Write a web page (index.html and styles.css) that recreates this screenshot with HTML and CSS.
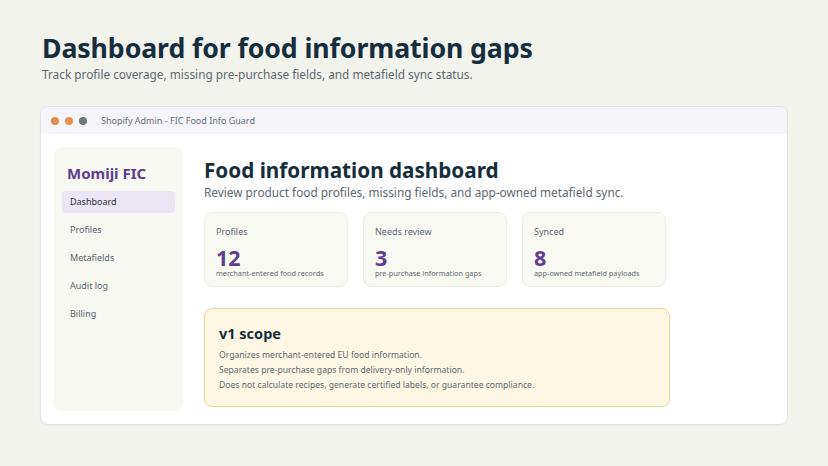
FILE: index.html
```html
<!DOCTYPE html>
<html>
<head>
<meta charset="utf-8">
<link rel="stylesheet" href="styles.css">
</head>
<body>
<header class="page-head">
  <h1 class="page-title">Dashboard for food information gaps</h1>
  <p class="page-sub">Track profile coverage, missing pre-purchase fields, and metafield sync status.</p>
</header>
<div class="window">
  <div class="titlebar">
    <span class="dot dot-a"></span>
    <span class="dot dot-b"></span>
    <span class="dot dot-c"></span>
    <span class="titlebar-text">Shopify Admin - FIC Food Info Guard</span>
  </div>
  <div class="window-body">
    <nav class="sidebar">
      <div class="brand">Momiji FIC</div>
      <ul class="nav">
        <li class="nav-item active">Dashboard</li>
        <li class="nav-item">Profiles</li>
        <li class="nav-item">Metafields</li>
        <li class="nav-item">Audit log</li>
        <li class="nav-item">Billing</li>
      </ul>
    </nav>
    <main class="main">
      <h2 class="main-title">Food information dashboard</h2>
      <p class="main-sub">Review product food profiles, missing fields, and app-owned metafield sync.</p>
      <div class="cards">
        <div class="card">
          <div class="card-label">Profiles</div>
          <div class="card-num">12</div>
          <div class="card-desc">merchant-entered food records</div>
        </div>
        <div class="card">
          <div class="card-label">Needs review</div>
          <div class="card-num">3</div>
          <div class="card-desc">pre-purchase information gaps</div>
        </div>
        <div class="card">
          <div class="card-label">Synced</div>
          <div class="card-num">8</div>
          <div class="card-desc">app-owned metafield payloads</div>
        </div>
      </div>
      <section class="scope">
        <h3 class="scope-title">v1 scope</h3>
        <p class="scope-line">Organizes merchant-entered EU food information.</p>
        <p class="scope-line">Separates pre-purchase gaps from delivery-only information.</p>
        <p class="scope-line">Does not calculate recipes, generate certified labels, or guarantee compliance.</p>
      </section>
    </main>
  </div>
</div>
</body>
</html>
```
FILE: styles.css
```css
* { box-sizing: border-box; }
html, body { margin: 0; padding: 0; }
body {
  width: 828px;
  height: 466px;
  background: #f3f3ee;
  font-family: "Noto Sans", "Open Sans", sans-serif;
  color: #17303d;
  padding: 30px 40px 0 40px;
  overflow: hidden;
}
.page-head { padding-left: 2px; }
.page-title {
  margin: 0;
  font-size: 26.7px;
  line-height: 36px;
  font-weight: 700;
  color: #162e3c;
  letter-spacing: -0.1px;
}
.page-sub {
  margin: 0;
  font-size: 11.8px;
  line-height: 16px;
  color: #5d6870;
}
.window {
  margin-top: 24px;
  width: 748px;
  height: 319px;
  background: #fff;
  border-radius: 8px;
  border: 1px solid #e3e3e6;
  box-shadow: 0 1px 2px rgba(0,0,0,0.03);
  overflow: hidden;
  display: flex;
  flex-direction: column;
}
.titlebar {
  height: 27px;
  background: #f5f4f9;
  display: flex;
  align-items: center;
  padding-left: 10px;
  flex-shrink: 0;
}
.dot {
  width: 8px;
  height: 8px;
  border-radius: 50%;
  margin-right: 6px;
}
.dot-a { background: #e98a4c; }
.dot-b { background: #ea9152; }
.dot-c { background: #6e777c; }
.titlebar-text {
  margin-left: 8px;
  font-size: 9px;
  color: #68717a;
}
.window-body {
  flex: 1;
  display: flex;
  padding: 13px 0 13px 13px;
}
.sidebar {
  width: 129px;
  background: #f8f8f3;
  border-radius: 8px;
  padding: 16px 8px;
}
.brand {
  font-size: 15px;
  font-weight: 700;
  color: #5f3e92;
  padding-left: 5px;
  line-height: 20px;
}
.nav {
  list-style: none;
  margin: 8px 0 0 0;
  padding: 0;
}
.nav-item {
  height: 22px;
  line-height: 22px;
  font-size: 9px;
  color: #5c6670;
  padding-left: 8px;
  border-radius: 4px;
  margin-bottom: 6px;
}
.nav-item.active {
  background: #ebe5f4;
  color: #27323a;
}
.main {
  padding: 9px 0 0 21px;
  flex: 1;
}
.main-title {
  margin: 0;
  font-size: 20.7px;
  line-height: 28px;
  font-weight: 700;
  color: #162e3c;
}
.main-sub {
  margin: 0;
  font-size: 11.8px;
  line-height: 16px;
  color: #5d6870;
}
.cards {
  display: flex;
  gap: 15px;
  margin-top: 12px;
}
.card {
  width: 144px;
  height: 75px;
  background: #f9f9f4;
  border: 1px solid #ecece5;
  border-radius: 8px;
  padding: 12px 11px 0 11px;
}
.card-label {
  font-size: 9px;
  line-height: 14px;
  color: #5d6870;
}
.card-num {
  font-size: 21.5px;
  font-weight: 700;
  line-height: 16px;
  color: #5f3e92;
  margin-top: 11px;
}
.card-desc {
  font-size: 7.3px;
  line-height: 9px;
  color: #5d6870;
  margin-top: 3px;
}
.scope {
  margin-top: 21px;
  width: 466px;
  height: 99px;
  background: #fef7e3;
  border: 1px solid #edd697;
  border-radius: 8px;
  padding: 14px 14px;
}
.scope-title {
  margin: 0 0 5px 0;
  font-size: 14.5px;
  line-height: 20px;
  font-weight: 700;
  color: #162e3c;
}
.scope-line {
  margin: 0;
  font-size: 8.6px;
  line-height: 15px;
  color: #5d6870;
}
```
